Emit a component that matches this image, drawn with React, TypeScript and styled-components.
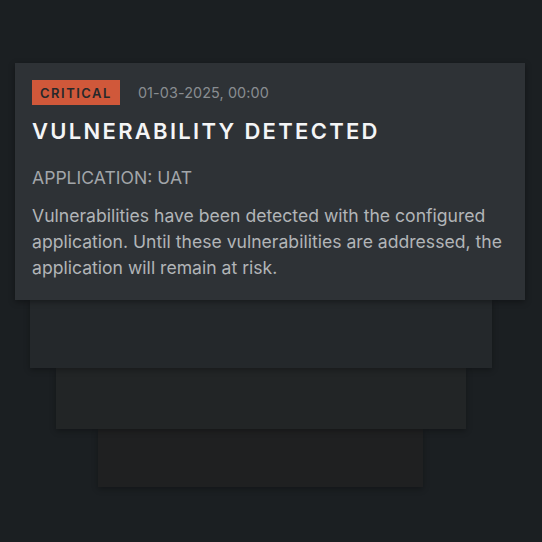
import React from "react";
import styled, { createGlobalStyle } from "styled-components";

const Global = createGlobalStyle`
  html, body { margin: 0; padding: 0; background: #1b1f22; }
  body { font-family: Inter, "Noto Sans", sans-serif; -webkit-font-smoothing: antialiased; }
`;

const Stage = styled.div`
  display: flex;
  flex-direction: column;
  align-items: flex-start;
  padding-top: 63px;
  min-height: 542px;
  box-sizing: border-box;
`;

const Card = styled.div`
  position: relative;
  z-index: 4;
  margin-left: 15px;
  width: 510px;
  box-sizing: border-box;
  padding: 17px 16px 19px 17px;
  background: #2e3236;
  box-shadow: 0 2px 6px rgba(0, 0, 0, 0.35);
`;

const Ghost = styled.div<{ $left: number; $width: number; $height: number; $bg: string; $z: number }>`
  position: relative;
  z-index: ${(p) => p.$z};
  margin-left: ${(p) => p.$left}px;
  width: ${(p) => p.$width}px;
  height: ${(p) => p.$height}px;
  background: ${(p) => p.$bg};
  box-shadow: 0 2px 6px rgba(0, 0, 0, 0.3);
`;

const Meta = styled.div`
  display: flex;
  align-items: center;
  gap: 18px;
`;

const Badge = styled.span`
  display: inline-flex;
  align-items: center;
  height: 25px;
  padding: 0 8px;
  background: #d0583a;
  color: #26282a;
  font-size: 13px;
  font-weight: 600;
  letter-spacing: 1.5px;
`;

const DateText = styled.span`
  color: #898d91;
  font-size: 14.4px;
  letter-spacing: 0.1px;
`;

const Title = styled.h1`
  margin: 12px 0 0;
  color: #f4f5f6;
  font-size: 22px;
  font-weight: 600;
  letter-spacing: 2.3px;
  line-height: 28px;
`;

const AppLine = styled.div`
  margin-top: 21px;
  color: #a2a6aa;
  font-size: 17.6px;
  line-height: 24px;
`;

const Body = styled.p`
  margin: 13px 0 0;
  color: #b2b5b8;
  font-size: 17.6px;
  line-height: 26px;
`;

export default function App() {
  return (
    <>
      <Global />
      <Stage>
        <Card>
          <Meta>
            <Badge>CRITICAL</Badge>
            <DateText>01-03-2025, 00:00</DateText>
          </Meta>
          <Title>VULNERABILITY DETECTED</Title>
          <AppLine>APPLICATION: UAT</AppLine>
          <Body>
            Vulnerabilities have been detected with the configured application. Until these
            vulnerabilities are addressed, the application will remain at risk.
          </Body>
        </Card>
        <Ghost $left={30} $width={462} $height={68} $bg="#24282b" $z={3} />
        <Ghost $left={56} $width={410} $height={61} $bg="#222526" $z={2} />
        <Ghost $left={98} $width={325} $height={58} $bg="#1f2021" $z={1} />
      </Stage>
    </>
  );
}
